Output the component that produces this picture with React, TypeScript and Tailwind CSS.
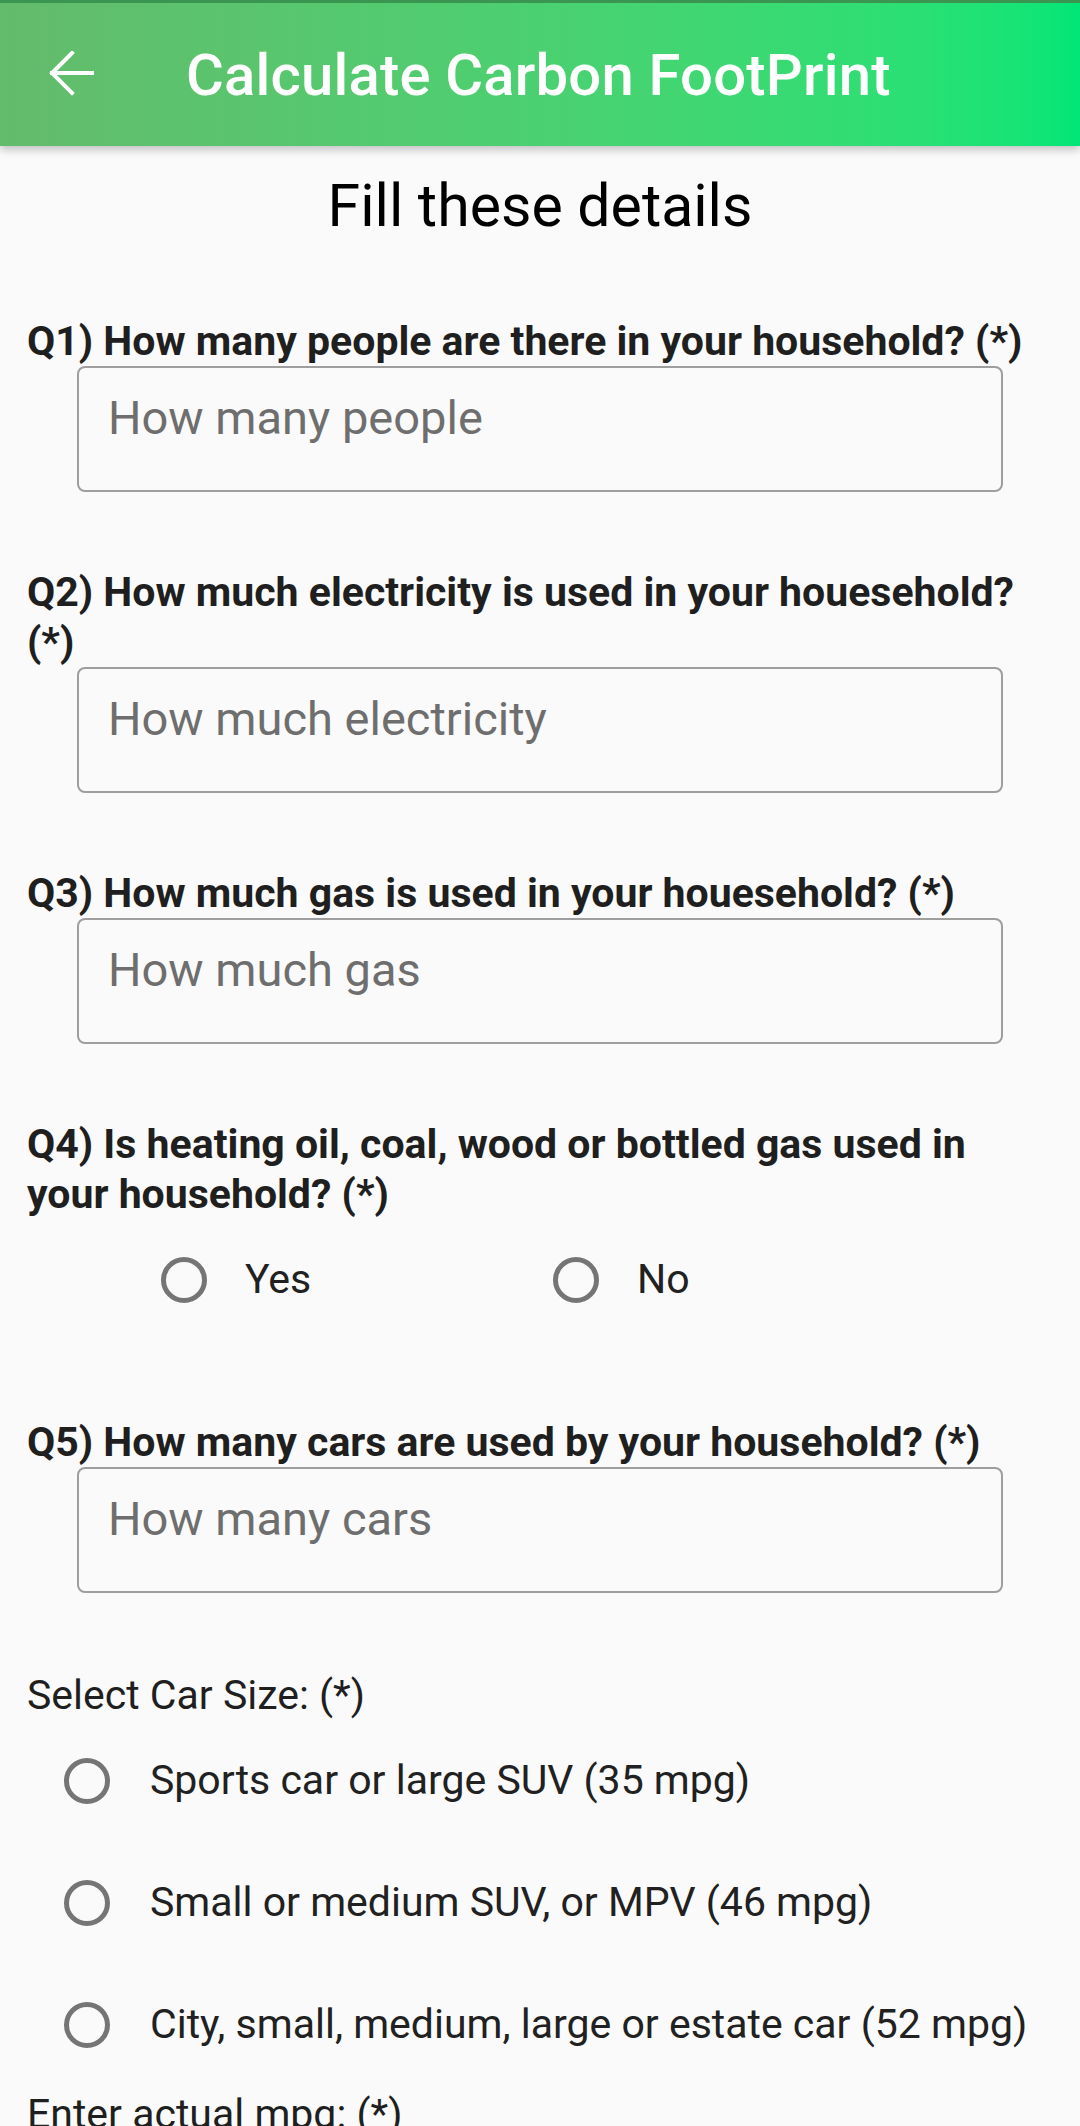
import React from 'react';

const questions = [
  { id: 'q1', label: 'Q1) How many people are there in your household? (*)', hint: 'How many people' },
  { id: 'q2', label: 'Q2) How much electricity is used in your houesehold? (*)', hint: 'How much electricity' },
  { id: 'q3', label: 'Q3) How much gas is used in your houesehold? (*)', hint: 'How much gas' },
];

const carSizes = [
  'Sports car or large SUV (35 mpg)',
  'Small or medium SUV, or MPV (46 mpg)',
  'City, small, medium, large or estate car (52 mpg)',
];

const Radio = () => (
  <span className="block w-[46px] h-[46px] rounded-full border-[5px] border-[#757575] shrink-0" />
);

const Field = ({ hint }: { hint: string }) => (
  <input
    placeholder={hint}
    className="block ml-[77px] w-[926px] h-[126px] border-[2px] border-[#9e9e9e] rounded-[8px] bg-transparent pl-[29px] pt-[22px] pb-[46px] text-[47px] leading-[54px] text-[#212121] placeholder:text-[#6e6e6e] outline-none"
  />
);

const Label = ({ children }: { children: React.ReactNode }) => (
  <p className="px-[27px] text-[41px] leading-[50px] font-bold text-[#1f1f1f]">{children}</p>
);

export default function App() {
  return (
    <div className="min-h-[2126px] bg-[#fafafa] font-['Roboto',sans-serif] overflow-hidden">
      {/* App bar */}
      <header className="h-[146px] border-t-[3px] border-[#3a9550] bg-gradient-to-r from-[#63bb6b] to-[#00e676] shadow-[0_4px_8px_rgba(0,0,0,0.22)] flex items-center relative z-10">
        <svg className="ml-[48px] w-[48px] h-[48px]" viewBox="0 0 48 48" fill="none" stroke="white" strokeWidth="4" strokeLinecap="square">
          <path d="M4 22H44" />
          <path d="M24 2L4 22L24 42" />
        </svg>
        <h1 className="ml-[90px] text-white text-[58px] font-medium leading-none tracking-[0.2px]">Calculate Carbon FootPrint</h1>
      </header>

      <h2 className="mt-[26px] text-center text-black text-[59px] leading-[68px]">Fill these details</h2>

      <div className="flex flex-col">
        {questions.map((q, i) => (
          <div key={q.id} className={i === 0 ? 'mt-[76px]' : 'mt-[75px]'}>
            <Label>{q.label}</Label>
            <Field hint={q.hint} />
          </div>
        ))}

        <div className="mt-[75px]">
          <Label>Q4) Is heating oil, coal, wood or bottled gas used in your household? (*)</Label>
          <div className="flex h-[122px] items-center pl-[161px]">
            {['Yes', 'No'].map(o => (
              <div key={o} className="w-[392px] flex items-center gap-[38px]">
                <Radio />
                <span className="text-[41px] text-[#212121]">{o}</span>
              </div>
            ))}
          </div>
        </div>

        <div className="mt-[76px]">
          <Label>Q5) How many cars are used by your household? (*)</Label>
          <Field hint="How many cars" />
        </div>

        <p className="mt-[77px] px-[27px] text-[41px] leading-[50px] text-[#1f1f1f]">Select Car Size: (*)</p>
        {carSizes.map(c => (
          <div key={c} className="h-[122px] flex items-center pl-[64px] gap-[40px]">
            <Radio />
            <span className="text-[41px] text-[#212121] whitespace-nowrap">{c}</span>
          </div>
        ))}
        <p className="mt-[3px] px-[27px] text-[41px] leading-[50px] text-[#1f1f1f]">Enter actual mpg: (*)</p>
      </div>
    </div>
  );
}
